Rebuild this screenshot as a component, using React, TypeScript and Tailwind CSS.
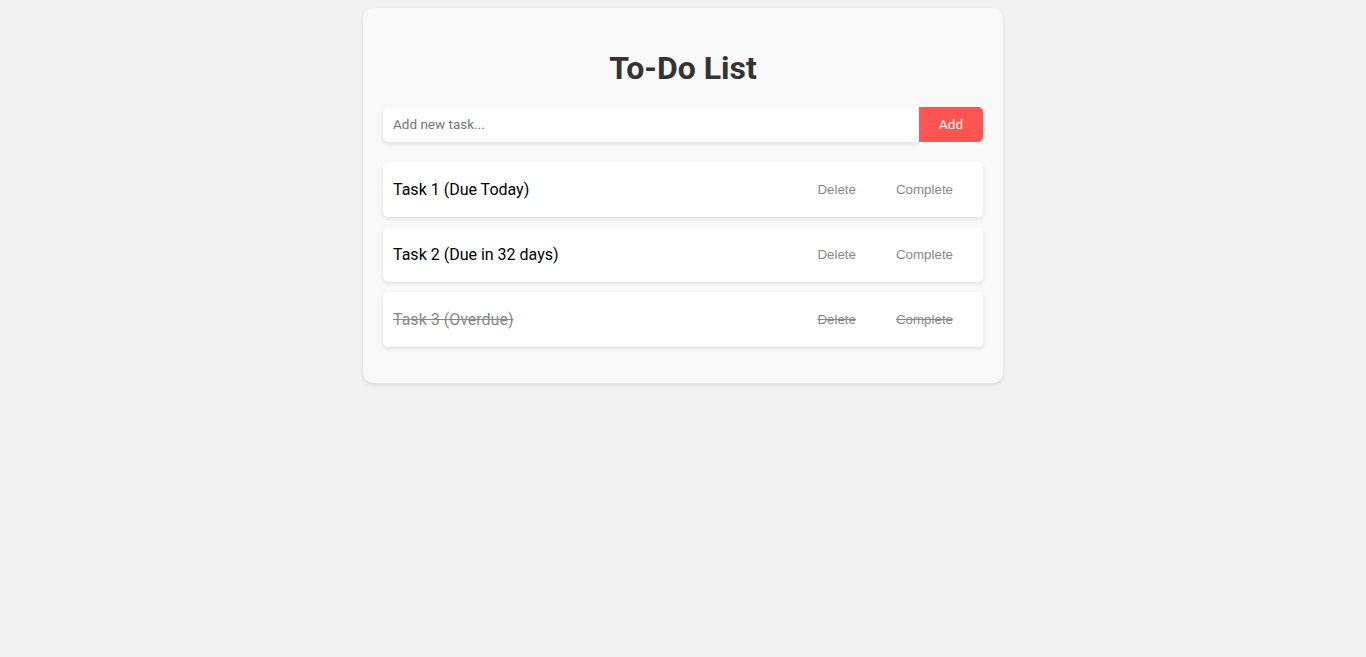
import React from "react";

const tasks = [
  { text: "Task 1 (Due Today)", done: false },
  { text: "Task 2 (Due in 32 days)", done: false },
  { text: "Task 3 (Overdue)", done: true },
];

export default function App() {
  return (
    <div className="min-h-[657px] bg-[#f2f2f2] pt-2 font-['Roboto',sans-serif]">
      <div className="mx-auto w-[640px] rounded-[10px] bg-[#f9f9f9] p-5 shadow-[0_2px_4px_rgba(0,0,0,0.1)]">
        <h1 className="mt-[22px] mb-[20px] text-center text-[32px] font-bold leading-[37px] text-[#333]">To-Do List</h1>
        <div className="flex h-[35px]">
          <input
            className="flex-1 rounded-l-[5px] bg-white px-[10px] text-[13.5px] text-[#333] shadow-[0_2px_4px_rgba(0,0,0,0.1)] outline-none placeholder:text-[#757575] font-['Roboto',sans-serif]"
            placeholder="Add new task..."
          />
          <button className="w-16 rounded-r-[5px] bg-[#ff5552] text-[13.5px] text-white font-['Roboto',sans-serif]">Add</button>
        </div>
        <ul className="mt-5 mb-4 flex flex-col gap-[10px]">
          {tasks.map((t) => (
            <li
              key={t.text}
              className={`flex h-[55px] items-center rounded-[5px] bg-white px-[10px] shadow-[0_2px_4px_rgba(0,0,0,0.1)] ${t.done ? "line-through text-[#888]" : "text-black"}`}
            >
              <span className="flex-1 text-[16px]">{t.text}</span>
              <button className="px-5 py-[10px] text-[13.333px] text-[#888] font-['Liberation_Sans',Arial,sans-serif]">Delete</button>
              <button className="px-5 py-[10px] text-[13.333px] text-[#888] font-['Liberation_Sans',Arial,sans-serif]">Complete</button>
            </li>
          ))}
        </ul>
      </div>
    </div>
  );
}
